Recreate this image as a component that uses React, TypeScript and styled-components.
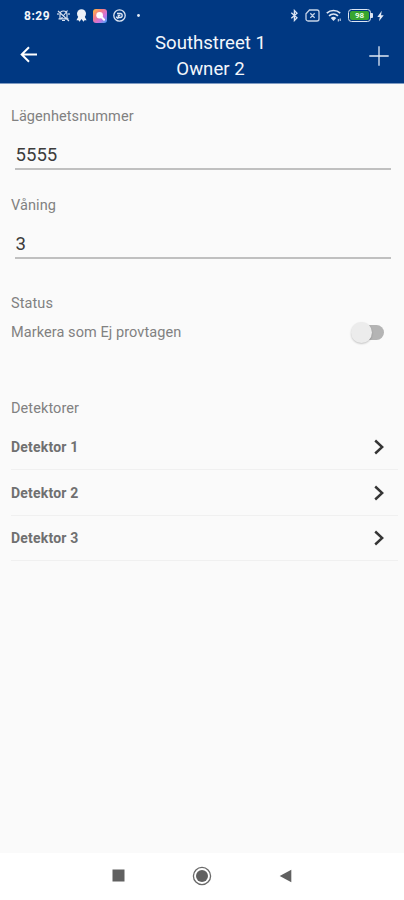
import React from "react";
import styled, { createGlobalStyle } from "styled-components";

const Global = createGlobalStyle`
  * { box-sizing: border-box; }
  body { margin: 0; background: #fafafa; font-family: Roboto, sans-serif; }
`;

const Screen = styled.div`
  width: 404px;
  height: 900px;
  display: flex;
  flex-direction: column;
  overflow: hidden;
  background: #fafafa;
`;

const Header = styled.header`
  height: 84px;
  flex: none;
  background: #003882;
  border-bottom: 1px solid #7f9bc2;
  color: #f3f6fb;
`;

const StatusBar = styled.div`
  height: 30px;
  padding: 1px 20px 0 24px;
  display: flex;
  align-items: center;
  justify-content: space-between;
`;

const StatusGroup = styled.div<{ $gap: number }>`
  display: flex;
  align-items: center;
  gap: ${(p) => p.$gap}px;
  svg { display: block; flex: none; }
`;

const Clock = styled.span`
  width: 27px;
  font-size: 12px;
  font-weight: 700;
  line-height: 14px;
  letter-spacing: 0.5px;
`;

const TitleBar = styled.div`
  height: 53px;
  display: grid;
  grid-template-columns: 56px 1fr 48px;
`;

const Title = styled.h1`
  margin: 0;
  padding-left: 9px;
  font-size: 18.6px;
  line-height: 26px;
  font-weight: 400;
  text-align: center;
`;

const IconButton = styled.button<{ $left: number; $top: number }>`
  border: 0;
  background: none;
  color: inherit;
  padding: ${(p) => p.$top}px 0 0 ${(p) => p.$left}px;
  display: flex;
  align-items: flex-start;
`;

const Content = styled.main`
  flex: 1;
  padding: 23px 6px 0 11px;
`;

const Label = styled.div`
  height: 20px;
  font-size: 14.5px;
  line-height: 20px;
  letter-spacing: 0.08px;
  color: #818181;
`;

const Field = styled.div<{ $after: number }>`
  margin-bottom: ${(p) => p.$after}px;
`;

const Input = styled.input`
  display: block;
  width: 376px;
  height: 34px;
  margin: 9px 0 0 4px;
  padding: 6px 0 0 0.5px;
  border: 0;
  border-bottom: 2px solid #c0c0c0;
  background: none;
  outline: none;
  font: 400 18.6px/26px Roboto, sans-serif;
  color: #3c3c3c;
`;

const SwitchRow = styled.div`
  height: 28px;
  margin: 5px 14px 52px 0;
  display: flex;
  align-items: center;
  justify-content: space-between;
`;

const Track = styled.div`
  width: 33px;
  height: 22px;
  margin-top: -2px;
  display: flex;
  align-items: center;
  &::after {
    content: "";
    width: 23px;
    height: 15px;
    margin-left: -11px;
    border-radius: 0 8px 8px 0;
    background: #b4b4b4;
  }
`;

const Thumb = styled.div`
  width: 21px;
  height: 21px;
  flex: none;
  position: relative;
  z-index: 1;
  border-radius: 50%;
  background: #ececec;
  box-shadow: 0 1px 2px rgba(0, 0, 0, 0.22);
`;

const Detectors = styled.div`
  margin-top: 6px;
`;

const DetectorRow = styled.div`
  height: 45.6px;
  padding: 1px 13px 0 0;
  display: flex;
  align-items: center;
  justify-content: space-between;
  border-bottom: 1px solid #f0f0f0;
  font-size: 14px;
  font-weight: 700;
  letter-spacing: 0.2px;
  color: #707070;
  &:first-child {
    height: 45px;
    padding-top: 0;
  }
  svg { display: block; }
`;

const NavBar = styled.nav`
  height: 47px;
  flex: none;
  padding: 0 112px 2px 112px;
  display: flex;
  align-items: center;
  justify-content: space-between;
  background: #fff;
  svg { display: block; }
`;

const MutedBell = () => (
  <svg width="13" height="13" viewBox="0 0 13 13" fill="none" stroke="#d5dfef" strokeWidth="1.2">
    <path d="M3 9.5V5.5a3.5 3.5 0 0 1 7 0v4M1.5 9.8h10M5 11.5h3M1 2l11 10M1 6v-2M12 6v-2M10.5 1.5l-7 9" />
  </svg>
);

const Ribbon = () => (
  <svg width="11" height="13" viewBox="0 0 11 13" fill="#eef2f8">
    <circle cx="5.5" cy="4.8" r="4.5" />
    <path d="M2.4 7.5.4 11.3l2.1-.1 1 1.5 2-2.6 2 2.6 1-1.5 2.1.1-2-3.8z" />
  </svg>
);

const GalleryApp = () => (
  <svg width="14" height="14" viewBox="0 0 14 14">
    <defs>
      <linearGradient id="gallery" x1="0" y1="0" x2="1" y2="1">
        <stop offset="0" stopColor="#ffc43a" />
        <stop offset=".35" stopColor="#f47c86" />
        <stop offset=".65" stopColor="#cf72df" />
        <stop offset="1" stopColor="#37a9fb" />
      </linearGradient>
    </defs>
    <rect width="14" height="14" rx="3" fill="url(#gallery)" />
    <circle cx="6.6" cy="6.2" r="3.3" fill="#fff" />
    <path d="m8.5 8 2.6 2.8" stroke="#fff" strokeWidth="2" strokeLinecap="round" />
  </svg>
);

const RoundApp = () => (
  <svg width="13" height="13" viewBox="0 0 13 13" fill="none" stroke="#dce5f3" strokeWidth="1.3">
    <circle cx="6.5" cy="6.5" r="5.7" />
    <path d="M4 4.5h3.2a2 2 0 0 1 0 4H5.3V6.5h2M3 7.8l2.3 2" />
  </svg>
);

const Dot = () => (
  <svg width="3" height="3" viewBox="0 0 3 3"><circle cx="1.5" cy="1.5" r="1.4" fill="#e4ebf6" /></svg>
);

const Bluetooth = () => (
  <svg width="9" height="13" viewBox="0 0 9 13" fill="none" stroke="#dce5f3" strokeWidth="1.3">
    <path d="m1.3 3.7 5.7 5-2.6 2.8V1.5L7 4.2 1.3 9.2" />
  </svg>
);

const NoSim = () => (
  <svg width="15" height="13" viewBox="0 0 15 13" fill="none" stroke="#c5d3e8" strokeWidth="1.3">
    <path d="M4.5 1H12a2 2 0 0 1 2 2v7a2 2 0 0 1-2 2H3a2 2 0 0 1-2-2V4.8zM5.3 4.3l4.4 4.6M9.7 4.3 5.3 8.9" />
  </svg>
);

const Wifi = () => (
  <svg width="16" height="13" viewBox="0 0 16 13" fill="none" stroke="#dce5f3" strokeWidth="1.7">
    <path d="M.8 4.1a10 10 0 0 1 13.4 0M3 6.8a7 7 0 0 1 9 0" />
    <path d="M4.7 9a4 4 0 0 1 5.6 0l-2.8 3z" fill="#dce5f3" stroke="none" />
    <path d="M12.3 10v2.5M14.2 9.5v2.5" strokeWidth="1" />
  </svg>
);

const BatteryBody = styled.div`
  width: 23px;
  height: 13px;
  border: 1px solid #dce5f3;
  border-radius: 3.5px;
  padding: 1px;
  margin-right: 2px;
  display: flex;
  position: relative;
  &::after {
    content: "";
    position: absolute;
    right: -3px;
    top: 3px;
    width: 2px;
    height: 5px;
    border-radius: 0 1px 1px 0;
    background: #dce5f3;
  }
`;

const BatteryLevel = styled.div`
  flex: 1;
  border-radius: 2px;
  background: #38a52f;
  color: #e9ffe5;
  font-size: 8px;
  font-weight: 700;
  line-height: 9px;
  text-align: center;
`;

const Bolt = () => (
  <svg width="7" height="12" viewBox="0 0 7 12" fill="#e4ebf6">
    <path d="M4.8.8.3 6.9h2.5L2 11.3l4.7-6H4z" />
  </svg>
);

const Arrow = () => (
  <svg width="18" height="17" viewBox="0 0 18 17" fill="none" stroke="#fff" strokeWidth="2">
    <path d="M17 8.5H2M9 1.2 1.7 8.5 9 15.8" />
  </svg>
);

const Plus = () => (
  <svg width="20" height="20" viewBox="0 0 20 20" stroke="#e1e9f5" strokeWidth="1.3">
    <path d="M10 .3v19.4M.3 10h19.4" />
  </svg>
);

const Chevron = () => (
  <svg width="11" height="16" viewBox="0 0 11 16" fill="none" stroke="#353535" strokeWidth="2.4">
    <path d="m1.2 1.5 7 6.5-7 6.5" />
  </svg>
);

const detectors = ["Detektor 1", "Detektor 2", "Detektor 3"];

export default function App() {
  return (
    <Screen>
      <Global />
      <Header>
        <StatusBar>
          <StatusGroup $gap={6}>
            <Clock>8:29</Clock>
            <MutedBell /><Ribbon /><GalleryApp /><RoundApp />
            <StatusGroup $gap={1}>&nbsp;<Dot /></StatusGroup>
          </StatusGroup>
          <StatusGroup $gap={6}>
            <Bluetooth /><NoSim /><Wifi />
            <StatusGroup $gap={4}>
              <BatteryBody><BatteryLevel>98</BatteryLevel></BatteryBody>
              <Bolt />
            </StatusGroup>
          </StatusGroup>
        </StatusBar>
        <TitleBar>
          <IconButton $left={20} $top={16} aria-label="Back"><Arrow /></IconButton>
          <Title>Southstreet 1<br />Owner 2</Title>
          <IconButton $left={13} $top={16} aria-label="Add"><Plus /></IconButton>
        </TitleBar>
      </Header>
      <Content>
        <Field $after={26}>
          <Label>Lägenhetsnummer</Label>
          <Input defaultValue="5555" />
        </Field>
        <Field $after={35}>
          <Label>Våning</Label>
          <Input defaultValue="3" />
        </Field>
        <Label>Status</Label>
        <SwitchRow>
          <Label>Markera som Ej provtagen</Label>
          <Track role="switch" aria-checked="false"><Thumb /></Track>
        </SwitchRow>
        <Label>Detektorer</Label>
        <Detectors>
          {detectors.map((name) => (
            <DetectorRow key={name}>{name}<Chevron /></DetectorRow>
          ))}
        </Detectors>
      </Content>
      <NavBar>
        <svg width="13" height="13" viewBox="0 0 13 13"><rect x=".5" y=".5" width="12" height="12" fill="#606060" /></svg>
        <svg width="20" height="20" viewBox="0 0 20 20">
          <circle cx="10" cy="10" r="8.6" fill="none" stroke="#696969" strokeWidth="1.3" />
          <circle cx="10" cy="10" r="6" fill="#606060" />
        </svg>
        <svg width="13" height="14" viewBox="0 0 13 14"><path d="M12.3.7v12.6L.7 7z" fill="#606060" /></svg>
      </NavBar>
    </Screen>
  );
}
